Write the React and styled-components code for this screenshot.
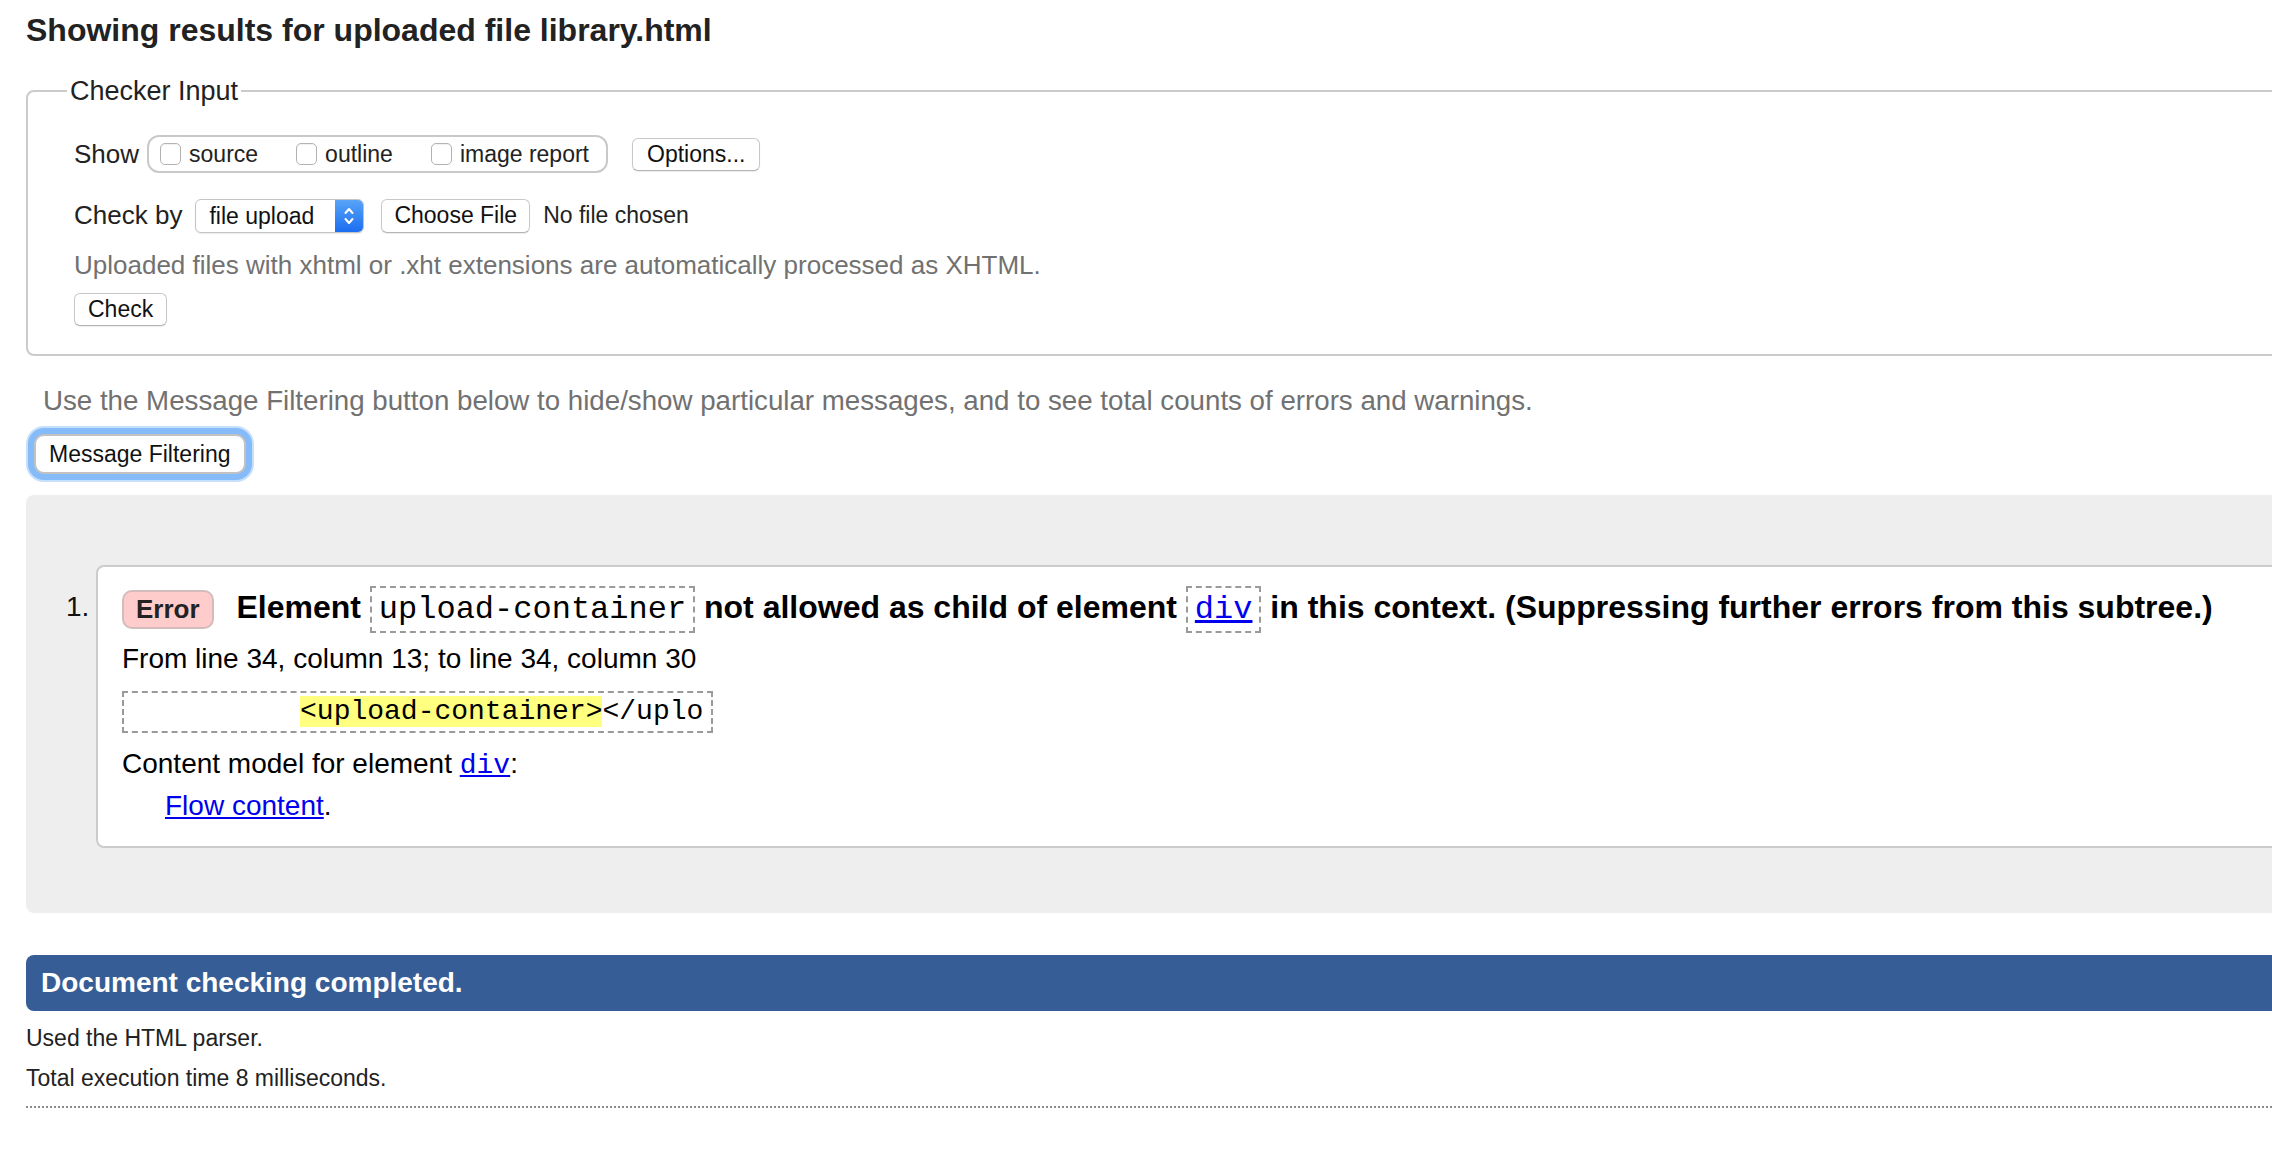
import React from 'react';
import styled, { createGlobalStyle } from 'styled-components';

const GlobalStyle = createGlobalStyle`
  html, body {
    margin: 0;
    padding: 0;
    background: #fff;
    overflow: hidden;
  }
  body {
    font-family: "Liberation Sans", Arial, Helvetica, sans-serif;
    color: #222;
  }
`;

const Page = styled.div`
  width: 2400px;
  padding: 12px 0 0 26px;
  box-sizing: border-box;
`;

const Title = styled.h2`
  margin: 0;
  font-size: 32px;
  line-height: 37px;
  font-weight: bold;
  color: #222;
`;

// checker input form
const Fieldset = styled.fieldset`
  margin: 26px 0 0 0;
  padding: 0 0 28px 46px;
  border: 2px solid #cbcbcb;
  border-radius: 8px;
  min-width: 0;
`;

const Legend = styled.legend`
  margin-left: -7px;
  padding: 0 3px;
  font-size: 27px;
  line-height: 32px;
  color: #222;
`;

const FormRow = styled.div`
  display: flex;
  align-items: center;
  gap: ${p => p.gap}px;
  margin-top: ${p => p.top}px;
  height: ${p => p.h}px;
`;

const FieldLabel = styled.span`
  font-size: 26px;
  color: #222;
`;

const CheckGroup = styled.div`
  display: flex;
  align-items: center;
  gap: 38px;
  height: 38px;
  box-sizing: border-box;
  padding: 0 17px 0 11px;
  border: 2px solid #c9c9c9;
  border-radius: 12px;
  margin-right: 16px;
`;

const CheckItem = styled.label`
  display: flex;
  align-items: center;
  gap: 8px;
  font-size: 23px;
  color: #222;
`;

const CheckBox = styled.span`
  width: 21px;
  height: 22px;
  box-sizing: border-box;
  border: 1.5px solid #b3b3b3;
  border-radius: 5px;
  background: #fff;
  box-shadow: inset 0 1px 1px rgba(0, 0, 0, 0.06);
`;

const Button = styled.button`
  height: ${p => p.h || 33}px;
  padding: 0 ${p => p.px || 13}px;
  font-family: "Liberation Sans", Arial, sans-serif;
  font-size: 23px;
  color: #111;
  background: #fff;
  border: 1px solid #c8c8c8;
  border-bottom-color: #b5b5b5;
  border-radius: 6px;
  box-shadow: 0 1px 1px rgba(0, 0, 0, 0.08);
`;

const Select = styled.div`
  display: flex;
  width: 169px;
  height: 34px;
  box-sizing: border-box;
  border: 1px solid #c4c4c4;
  border-radius: 6px;
  overflow: hidden;
  background: #fff;
  box-shadow: 0 1px 1px rgba(0, 0, 0, 0.08);
`;

const SelectValue = styled.span`
  flex: 1;
  padding-left: 13px;
  font-size: 23px;
  line-height: 32px;
  color: #111;
`;

const SelectArrows = styled.span`
  width: 28px;
  display: flex;
  align-items: center;
  justify-content: center;
  background: linear-gradient(#58a4f9, #1b6ef0);
`;

const FileName = styled.span`
  font-size: 23px;
  color: #222;
`;

const Hint = styled.p`
  margin: 17px 0 0 0;
  font-size: 26px;
  line-height: 30px;
  color: #717171;
`;

const CheckRow = styled.div`
  margin-top: 13px;
`;

// message filtering
const FilterNote = styled.p`
  margin: 29px 0 0 17px;
  font-size: 27.7px;
  line-height: 32px;
  color: #717171;
`;

const FocusButton = styled.button`
  display: block;
  margin: 17px 0 0 8px;
  height: 40px;
  padding: 0 13px;
  font-family: "Liberation Sans", Arial, sans-serif;
  font-size: 23px;
  color: #111;
  background: #fff;
  border: 2px solid #c2c2c2;
  border-radius: 10px;
  box-shadow: 0 0 0 6px #85bbf8, 0 0 0 8px #c6dffb;
`;

// results
const Results = styled.div`
  margin-top: 21px;
  background: #eeeeee;
  border-radius: 8px;
  padding: 70px 0 65px 40px;
`;

const ResultItem = styled.div`
  display: flex;
`;

const ItemNumber = styled.span`
  width: 30px;
  margin-top: 18px;
  font-size: 28px;
  line-height: 48px;
  color: #111;
`;

const MessageBox = styled.div`
  flex: 1;
  background: #fff;
  border: 2px solid #cccccc;
  border-radius: 8px;
  padding: 16px 24px 24px 24px;
  color: #000;
`;

const MessageLine = styled.p`
  margin: 0;
  font-size: 32px;
  line-height: 48px;
  font-weight: bold;
  white-space: nowrap;
`;

const Badge = styled.span`
  display: inline-block;
  vertical-align: middle;
  margin-right: 14px;
  padding: 2px 12px;
  font-size: 26px;
  line-height: 31px;
  font-weight: bold;
  color: #222;
  background: #ffcccc;
  border: 2px solid #d2bcbc;
  border-radius: 10px;
`;

const CodeTag = styled.code`
  display: inline-block;
  vertical-align: middle;
  padding: 2px 7px;
  font-family: "Liberation Mono", "Courier New", monospace;
  font-weight: normal;
  font-size: 32px;
  line-height: 39px;
  border: 2px dashed #9a9a9a;

  a {
    color: #0000ee;
    text-decoration: underline;
  }
`;

const Location = styled.p`
  margin: 10px 0 0 0;
  font-size: 28px;
  line-height: 32px;
`;

const Extract = styled.pre`
  width: fit-content;
  margin: 16px 0 0 0;
  padding: 3px 8px;
  font-family: "Liberation Mono", "Courier New", monospace;
  font-size: 28px;
  line-height: 32px;
  border: 2px dashed #9a9a9a;

  mark {
    background: #ffff80;
    color: #000;
  }
`;

const ContentModel = styled.p`
  margin: ${p => (p.indent ? '8px 0 0 43px' : '15px 0 0 0')};
  font-size: 28px;
  line-height: 32px;

  a {
    color: #0000ee;
    text-decoration: underline;
  }
  code {
    font-family: "Liberation Mono", "Courier New", monospace;
  }
`;

// footer
const DoneBar = styled.div`
  margin-top: 42px;
  height: 56px;
  padding-left: 15px;
  background: #365d95;
  border-radius: 8px;
  color: #fff;
  font-size: 28px;
  font-weight: bold;
  line-height: 56px;
`;

const Stat = styled.p`
  margin: ${p => p.top}px 0 0 0;
  font-size: 23px;
  line-height: 28px;
  color: #222;
`;

const DottedRule = styled.hr`
  margin: 14px 0 0 0;
  border: 0;
  border-top: 2px dotted #8a8a8a;
`;

const Arrows = () => (
  <svg width="12" height="22" viewBox="0 0 12 22" fill="none" stroke="#fff" strokeWidth="2" strokeLinecap="round" strokeLinejoin="round">
    <path d="M2.5 8 L6 4 L9.5 8" />
    <path d="M2.5 14 L6 18 L9.5 14" />
  </svg>
);

const checkOptions = ['source', 'outline', 'image report'];

export default function App() {
  return (
    <>
      <GlobalStyle />
      <Page>
        <Title>Showing results for uploaded file library.html</Title>

        <Fieldset>
          <Legend>Checker Input</Legend>
          <FormRow top={28} h={38} gap={8}>
            <FieldLabel>Show</FieldLabel>
            <CheckGroup>
              {checkOptions.map(opt => (
                <CheckItem key={opt}>
                  <CheckBox />
                  {opt}
                </CheckItem>
              ))}
            </CheckGroup>
            <Button px={14}>Options...</Button>
          </FormRow>
          <FormRow top={25} h={35} gap={13}>
            <FieldLabel>Check by</FieldLabel>
            <Select>
              <SelectValue>file upload</SelectValue>
              <SelectArrows><Arrows /></SelectArrows>
            </Select>
            <Button h={34} px={12} style={{ marginLeft: 4 }}>Choose File</Button>
            <FileName>No file chosen</FileName>
          </FormRow>
          <Hint>Uploaded files with xhtml or .xht extensions are automatically processed as XHTML.</Hint>
          <CheckRow>
            <Button>Check</Button>
          </CheckRow>
        </Fieldset>

        <FilterNote>
          Use the Message Filtering button below to hide/show particular messages, and to see total counts of errors and warnings.
        </FilterNote>
        <FocusButton>Message Filtering</FocusButton>

        <Results>
          <ResultItem>
            <ItemNumber>1.</ItemNumber>
            <MessageBox>
              <MessageLine>
                <Badge>Error</Badge> Element <CodeTag>upload-container</CodeTag> not allowed as child of element{' '}
                <CodeTag><a href="#">div</a></CodeTag> in this context. (Suppressing further errors from this subtree.)
              </MessageLine>
              <Location>From line 34, column 13; to line 34, column 30</Location>
              <Extract>{'          '}<mark>{'<upload-container>'}</mark>{'</uplo'}</Extract>
              <ContentModel>
                Content model for element <code><a href="#">div</a></code>:
              </ContentModel>
              <ContentModel indent>
                <a href="#">Flow content</a>.
              </ContentModel>
            </MessageBox>
          </ResultItem>
        </Results>

        <DoneBar>Document checking completed.</DoneBar>
        <Stat top={13}>Used the HTML parser.</Stat>
        <Stat top={12}>Total execution time 8 milliseconds.</Stat>
        <DottedRule />
      </Page>
    </>
  );
}
